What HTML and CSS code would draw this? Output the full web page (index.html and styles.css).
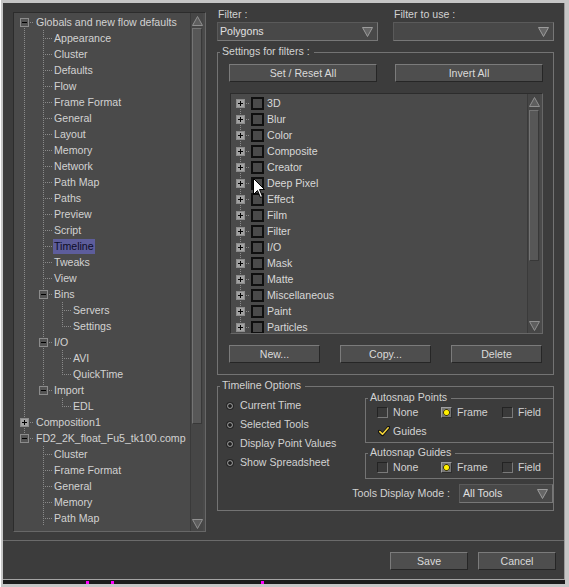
FILE: index.html
```html
<!DOCTYPE html>
<html>
<head>
<meta charset="utf-8">
<title>Preferences</title>
<link rel="stylesheet" href="styles.css">
</head>
<body>
<div class="window">
  <div class="main">
    <div class="tree">
      <div class="tree-rows">
        <div class="row"><i class="c first"><b class="box minus"></b></i><span class="t r">Globals and new flow defaults</span></div>
        <div class="row"><i class="c pipe"></i><i class="c tee"></i><span class="t">Appearance</span></div>
        <div class="row"><i class="c pipe"></i><i class="c tee"></i><span class="t">Cluster</span></div>
        <div class="row"><i class="c pipe"></i><i class="c tee"></i><span class="t">Defaults</span></div>
        <div class="row"><i class="c pipe"></i><i class="c tee"></i><span class="t">Flow</span></div>
        <div class="row"><i class="c pipe"></i><i class="c tee"></i><span class="t">Frame Format</span></div>
        <div class="row"><i class="c pipe"></i><i class="c tee"></i><span class="t">General</span></div>
        <div class="row"><i class="c pipe"></i><i class="c tee"></i><span class="t">Layout</span></div>
        <div class="row"><i class="c pipe"></i><i class="c tee"></i><span class="t">Memory</span></div>
        <div class="row"><i class="c pipe"></i><i class="c tee"></i><span class="t">Network</span></div>
        <div class="row"><i class="c pipe"></i><i class="c tee"></i><span class="t">Path Map</span></div>
        <div class="row"><i class="c pipe"></i><i class="c tee"></i><span class="t">Paths</span></div>
        <div class="row"><i class="c pipe"></i><i class="c tee"></i><span class="t">Preview</span></div>
        <div class="row"><i class="c pipe"></i><i class="c tee"></i><span class="t">Script</span></div>
        <div class="row"><i class="c pipe"></i><i class="c tee"></i><span class="t sel">Timeline</span></div>
        <div class="row"><i class="c pipe"></i><i class="c tee"></i><span class="t">Tweaks</span></div>
        <div class="row"><i class="c pipe"></i><i class="c tee"></i><span class="t">View</span></div>
        <div class="row"><i class="c pipe"></i><i class="c tee"><b class="box minus"></b></i><span class="t">Bins</span></div>
        <div class="row"><i class="c pipe"></i><i class="c pipe"></i><i class="c tee"></i><span class="t">Servers</span></div>
        <div class="row"><i class="c pipe"></i><i class="c pipe"></i><i class="c elbow"></i><span class="t">Settings</span></div>
        <div class="row"><i class="c pipe"></i><i class="c tee"><b class="box minus"></b></i><span class="t">I/O</span></div>
        <div class="row"><i class="c pipe"></i><i class="c pipe"></i><i class="c tee"></i><span class="t">AVI</span></div>
        <div class="row"><i class="c pipe"></i><i class="c pipe"></i><i class="c elbow"></i><span class="t">QuickTime</span></div>
        <div class="row"><i class="c pipe"></i><i class="c elbow"><b class="box minus"></b></i><span class="t">Import</span></div>
        <div class="row"><i class="c pipe"></i><i class="c"></i><i class="c elbow"></i><span class="t">EDL</span></div>
        <div class="row"><i class="c tee"><b class="box plus"></b></i><span class="t r">Composition1</span></div>
        <div class="row"><i class="c elbow"><b class="box minus"></b></i><span class="t r">FD2_2K_float_Fu5_tk100.comp</span></div>
        <div class="row"><i class="c"></i><i class="c tee"></i><span class="t">Cluster</span></div>
        <div class="row"><i class="c"></i><i class="c tee"></i><span class="t">Frame Format</span></div>
        <div class="row"><i class="c"></i><i class="c tee"></i><span class="t">General</span></div>
        <div class="row"><i class="c"></i><i class="c tee"></i><span class="t">Memory</span></div>
        <div class="row"><i class="c"></i><i class="c tee"></i><span class="t">Path Map</span></div>
      </div>
      <div class="sb tree-sb">
        <div class="sb-btn"><svg width="11" height="10" viewBox="0 0 11 10"><path d="M5.5 0.5L10.5 9.5H0.5Z" fill="#5e5e5e" stroke="#909090"/></svg></div>
        <div class="sb-track"><div class="sb-thumb tree-thumb"></div></div>
        <div class="sb-btn"><svg width="11" height="10" viewBox="0 0 11 10"><path d="M0.5 0.5H10.5L5.5 9.5Z" fill="#5e5e5e" stroke="#909090"/></svg></div>
      </div>
    </div>

    <div class="right">
      <div class="filters">
        <div class="fcol">
          <div class="lbl">Filter :</div>
          <div class="dd"><span>Polygons</span><svg width="11" height="10" viewBox="0 0 11 10"><path d="M0.5 0.5H10.5L5.5 9.5Z" fill="#666" stroke="#9c9c9c"/></svg></div>
        </div>
        <div class="fcol">
          <div class="lbl">Filter to use :</div>
          <div class="dd"><span></span><svg width="11" height="10" viewBox="0 0 11 10"><path d="M0.5 0.5H10.5L5.5 9.5Z" fill="#666" stroke="#9c9c9c"/></svg></div>
        </div>
      </div>

      <div class="group settings">
        <div class="gtitle">Settings for filters :</div>
        <div class="btnrow top">
          <div class="btn w148">Set / Reset All</div>
          <div class="btn w148">Invert All</div>
        </div>
        <div class="list">
          <div class="list-rows">
            <div class="row"><i class="c first"><b class="box plus"></b></i><i class="lcb"></i><span>3D</span></div>
            <div class="row"><i class="c tee"><b class="box plus"></b></i><i class="lcb"></i><span>Blur</span></div>
            <div class="row"><i class="c tee"><b class="box plus"></b></i><i class="lcb"></i><span>Color</span></div>
            <div class="row"><i class="c tee"><b class="box plus"></b></i><i class="lcb"></i><span>Composite</span></div>
            <div class="row"><i class="c tee"><b class="box plus"></b></i><i class="lcb"></i><span>Creator</span></div>
            <div class="row"><i class="c tee"><b class="box plus"></b></i><i class="lcb"></i><span>Deep Pixel</span></div>
            <div class="row"><i class="c tee"><b class="box plus"></b></i><i class="lcb"></i><span>Effect</span></div>
            <div class="row"><i class="c tee"><b class="box plus"></b></i><i class="lcb"></i><span>Film</span></div>
            <div class="row"><i class="c tee"><b class="box plus"></b></i><i class="lcb"></i><span>Filter</span></div>
            <div class="row"><i class="c tee"><b class="box plus"></b></i><i class="lcb"></i><span>I/O</span></div>
            <div class="row"><i class="c tee"><b class="box plus"></b></i><i class="lcb"></i><span>Mask</span></div>
            <div class="row"><i class="c tee"><b class="box plus"></b></i><i class="lcb"></i><span>Matte</span></div>
            <div class="row"><i class="c tee"><b class="box plus"></b></i><i class="lcb"></i><span>Miscellaneous</span></div>
            <div class="row"><i class="c tee"><b class="box plus"></b></i><i class="lcb"></i><span>Paint</span></div>
            <div class="row"><i class="c tee"><b class="box plus"></b></i><i class="lcb"></i><span>Particles</span></div>
          </div>
          <div class="sb list-sb">
            <div class="sb-btn"><svg width="11" height="10" viewBox="0 0 11 10"><path d="M5.5 0.5L10.5 9.5H0.5Z" fill="#5e5e5e" stroke="#909090"/></svg></div>
            <div class="sb-track"><div class="sb-thumb list-thumb"></div></div>
            <div class="sb-btn"><svg width="11" height="10" viewBox="0 0 11 10"><path d="M0.5 0.5H10.5L5.5 9.5Z" fill="#5e5e5e" stroke="#909090"/></svg></div>
          </div>
        </div>
        <div class="btnrow bot">
          <div class="btn w91">New...</div>
          <div class="btn w91">Copy...</div>
          <div class="btn w91">Delete</div>
        </div>
      </div>

      <div class="group timeline">
        <div class="gtitle">Timeline Options</div>
        <div class="tl-body">
          <div class="tl-left">
            <div class="ropt"><i class="rd"></i><span>Current Time</span></div>
            <div class="ropt"><i class="rd"></i><span>Selected Tools</span></div>
            <div class="ropt"><i class="rd"></i><span>Display Point Values</span></div>
            <div class="ropt"><i class="rd"></i><span>Show Spreadsheet</span></div>
          </div>
          <div class="tl-right">
            <div class="asg pts">
              <div class="gtitle">Autosnap Points</div>
              <div class="asrow">
                <div class="asi n"><i class="sq"></i><span>None</span></div>
                <div class="asi f"><i class="sq on"></i><span>Frame</span></div>
                <div class="asi"><i class="sq"></i><span>Field</span></div>
              </div>
              <div class="asrow">
                <div class="asi g"><svg class="chk" width="12" height="11" viewBox="0 0 12 11"><path d="M1.5 5.5L4.5 8.5L10.5 1.5" fill="none" stroke="#111" stroke-width="3.4" stroke-linecap="round" stroke-linejoin="round"/><path d="M1.8 5.6L4.5 8.2L10.2 1.8" fill="none" stroke="#f2d23a" stroke-width="1.6" stroke-linecap="round" stroke-linejoin="round"/></svg><span>Guides</span></div>
              </div>
            </div>
            <div class="asg gds">
              <div class="gtitle">Autosnap Guides</div>
              <div class="asrow">
                <div class="asi n"><i class="sq"></i><span>None</span></div>
                <div class="asi f"><i class="sq on"></i><span>Frame</span></div>
                <div class="asi"><i class="sq"></i><span>Field</span></div>
              </div>
            </div>
          </div>
        </div>
        <div class="tools">
          <span class="lbl2">Tools Display Mode :</span>
          <div class="dd"><span>All Tools</span><svg width="11" height="10" viewBox="0 0 11 10"><path d="M0.5 0.5H10.5L5.5 9.5Z" fill="#666" stroke="#9c9c9c"/></svg></div>
        </div>
      </div>
    </div>
  </div>
  <div class="sep"></div>
  <div class="actions">
    <div class="btn act">Save</div>
    <div class="btn act">Cancel</div>
  </div>
</div>
<div class="taskbar"><i class="mg m1"></i><i class="mg m2"></i><i class="mg m3"></i></div>
<svg class="cursor" width="13" height="21" viewBox="0 0 13 21"><path d="M0.5 0.5L0.5 16.5L4.5 12.5L7.5 19.5L9.5 18.5L6.5 11.5L11.5 11.5Z" fill="#fff" stroke="#000"/></svg>
</body>
</html>
```

FILE: styles.css
```css
* { box-sizing: border-box; }
html { margin: 0; }

:root {
  --dv: repeating-linear-gradient(to bottom, #8a8a8a 0 1px, transparent 1px 2px);
  --dh: repeating-linear-gradient(to right, #8a8a8a 0 1px, transparent 1px 2px);
}

body {
  margin: 0;
  width: 569px;
  height: 587px;
  overflow: hidden;
  background: #c6c6c6;
  border-left: 1px solid #ffffff;
  padding: 3px 0 0 2px;
  font-family: "Liberation Sans", Arial, sans-serif;
  font-size: 10.6px;
  line-height: 13px;
  color: #d2d2d2;
}

.window {
  width: 562px;
  height: 577px;
  background: #3c3c3c;
  border-right: 1px solid #9a9a9a;
  border-bottom: 1px solid #a4a4a4;
  padding-top: 5px;
  display: flex;
  flex-direction: column;
}

.main {
  flex: none;
  display: flex;
  align-items: flex-start;
  height: 524px;
  padding-left: 10px;
}

/* ---------- tree ---------- */
.tree {
  flex: none;
  margin-top: 4px;
  width: 193px;
  height: 520px;
  display: flex;
  background: #4a4a4a;
  border: 1px solid;
  border-color: #2c2c2c #676767 #676767 #2c2c2c;
}
.tree-rows {
  flex: 1;
  min-width: 0;
  padding: 1px 0 0 1px;
  overflow: hidden;
}
.row {
  display: flex;
  align-items: center;
  height: 16px;
  white-space: nowrap;
}
.c {
  flex: none;
  width: 19px;
  height: 16px;
  display: flex;
  align-items: center;
}
.pipe { background: var(--dv) 9px 0 / 1px 16px no-repeat; }
.tee { background: var(--dv) 9px 0 / 1px 16px no-repeat, var(--dh) 11px 8px / 8px 1px no-repeat; }
.elbow { background: var(--dv) 9px 0 / 1px 9px no-repeat, var(--dh) 11px 8px / 8px 1px no-repeat; }
.first { background: var(--dv) 9px 8px / 1px 8px no-repeat, var(--dh) 11px 8px / 8px 1px no-repeat; }

.box {
  width: 9px;
  height: 9px;
  margin-left: 5px;
  border: 1px solid #8c8c8c;
  background-repeat: no-repeat;
  background-position: center;
}
.minus {
  background-color: #545454;
  background-image: linear-gradient(#000, #000);
  background-size: 5px 1px;
}
.plus {
  background-color: #a2a2a2;
  background-image: linear-gradient(#000, #000), linear-gradient(#000, #000);
  background-size: 5px 1px, 1px 5px;
}

.t {
  padding: 0 1px;
  height: 15px;
  line-height: 15px;
}
.t.r { margin-left: 1px; }
.t.sel { background: #5d5d9b; color: #0c0c26; }

/* ---------- scrollbars ---------- */
.sb {
  flex: none;
  width: 13px;
  margin-right: 2px;
  display: flex;
  flex-direction: column;
  background: #464646;
  border-left: 1px solid #3a3a3a;
}
.sb-btn {
  flex: none;
  height: 15px;
  display: flex;
  align-items: center;
  justify-content: center;
}
.sb-track { flex: 1; }
.sb-thumb {
  margin: 0 1px;
  background: #575757;
  border: 1px solid;
  border-color: #747474 #383838 #383838 #747474;
}
.tree-thumb { height: 396px; }
.list-thumb { height: 151px; margin-top: 1px; }

/* ---------- right panel ---------- */
.right {
  flex: none;
  margin-left: 11px;
  width: 337px;
}
.filters { display: flex; gap: 15px; }
.fcol { width: 161px; }
.lbl { height: 14px; padding-left: 1px; }

.dd {
  height: 19px;
  display: flex;
  align-items: center;
  justify-content: space-between;
  background: #484848;
  border: 1px solid;
  border-color: #5a5a5a #777777 #777777 #5a5a5a;
  padding: 0 4px 0 2px;
  color: #e0e0e0;
}
.dd svg { flex: none; }

.group { border: 1px solid #737373; }
.gtitle {
  width: max-content;
  height: 13px;
  margin-top: -8px;
  padding: 0 4px 0 2px;
  background: #3c3c3c;
}

.settings {
  margin-top: 11px;
  padding: 0 10px 11px 11px;
}
.settings > .gtitle { margin-left: -9px; }

.btnrow { display: flex; }
.btnrow.top { margin-top: 6px; gap: 18px; }
.btnrow.bot { margin-top: 11px; gap: 20px; }

.btn {
  flex: none;
  height: 18px;
  display: flex;
  align-items: center;
  justify-content: center;
  background: #4e4e4e;
  border: 1px solid;
  border-color: #7b7b7b #262626 #262626 #7b7b7b;
  color: #dadada;
}
.w148 { width: 148px; }
.w91 { width: 91px; }

.list {
  margin: 11px 0 0 1px;
  width: 313px;
  height: 241px;
  display: flex;
  background: #4a4a4a;
  border: 1px solid;
  border-color: #2c2c2c #676767 #676767 #2c2c2c;
}
.list-rows {
  flex: 1;
  min-width: 0;
  padding-top: 1px;
  overflow: hidden;
  color: #d8d8d8;
}
.lcb {
  flex: none;
  width: 13px;
  height: 13px;
  border: 2px solid #0f0f0f;
  margin: 0 3px 0 1px;
}

/* ---------- timeline options ---------- */
.timeline {
  margin-top: 11px;
  padding-bottom: 7px;
}
.timeline > .gtitle { margin-left: 2px; }
.tl-body { display: flex; }
.tl-left {
  flex: none;
  width: 147px;
  padding: 4px 0 0 8px;
}
.ropt {
  height: 19px;
  display: flex;
  align-items: center;
  gap: 6px;
  white-space: nowrap;
}
.rd {
  flex: none;
  width: 8px;
  height: 8px;
  border-radius: 50%;
  background: radial-gradient(circle, #1c1c1c 0 1.4px, #808080 2px 2.6px, #262626 3.3px);
}
.tl-right { flex: 1; }
.asg {
  border: 1px solid #737373;
  border-right: none;
  padding: 0 0 3px 11px;
}
.asg.pts { margin-top: 6px; }
.asg.gds { margin-top: 10px; }
.asg > .gtitle { margin-left: -9px; }
.asrow {
  display: flex;
  align-items: center;
  height: 16px;
  white-space: nowrap;
}
.asrow + .asrow { margin-top: 3px; }
.asi {
  flex: none;
  display: flex;
  align-items: center;
  gap: 5px;
}
.asi.n { width: 64px; }
.asi.f { width: 61px; }
.asi.g { gap: 3px; }
.chk { flex: none; margin-left: 1px; }
.sq {
  flex: none;
  width: 11px;
  height: 11px;
  background: #3a3a3a;
  border: 1px solid;
  border-color: #232323 #7a7a7a #7a7a7a #232323;
}
.sq.on {
  background: radial-gradient(circle, #fff200 0 2px, #c8a800 2.5px, #3e3800 3px, #767676 3.6px);
  border-color: #a0a0a0 #2e2e2e #2e2e2e #a0a0a0;
}
.tools {
  display: flex;
  align-items: center;
  justify-content: flex-end;
  gap: 9px;
  margin-top: 5px;
}
.lbl2 { white-space: nowrap; }
.tools .dd { flex: none; width: 94px; padding-left: 3px; }

/* ---------- bottom ---------- */
.sep {
  flex: none;
  height: 1px;
  margin-top: 8px;
  background: #6b6b6b;
}
.actions {
  flex: none;
  display: flex;
  justify-content: flex-end;
  gap: 10px;
  margin-top: 11px;
  padding-right: 8px;
}
.act { width: 78px; }

.taskbar {
  width: 562px;
  height: 4px;
  background: #1b1b1b;
  display: flex;
}
.mg {
  flex: none;
  width: 3px;
  height: 3px;
  margin-top: 1px;
  background: #ff00ff;
}
.m1 { margin-left: 83px; }
.m2 { margin-left: 22px; }
.m3 { margin-left: 147px; }

.cursor {
  position: absolute;
  left: 253px;
  top: 178px;
}
```
